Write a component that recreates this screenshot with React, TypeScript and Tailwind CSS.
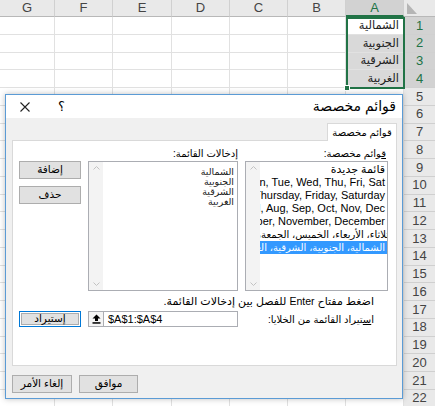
import React from 'react';

const FONT = "font-['Liberation_Sans','DejaVu_Sans',sans-serif]";

const colLetters = ['G', 'F', 'E', 'D', 'C', 'B', 'A'];
const aValues = ['الشمالية', 'الجنوبية', 'الشرقية', 'الغربية'];
const rows = Array.from({ length: 22 }, (_, i) => i + 1);

const customLists = [
  { text: 'قائمة جديدة', cls: '' },
  { text: 'Sun, Mon, Tue, Wed, Thu, Fri, Sat', cls: '' },
  { text: 'Sunday, Monday, Tuesday, Wednesday, Thursday, Friday, Saturday', cls: '' },
  { text: 'Jan, Feb, Mar, Apr, May, Jun, Jul, Aug, Sep, Oct, Nov, Dec', cls: '' },
  { text: 'January, February, March, April, May, June, July, August, September, October, November, December', cls: '' },
  { text: 'الأحد، الاثنين، الثلاثاء، الأربعاء، الخميس، الجمعة، السبت', cls: 'text-[10px] mr-[-67px]' },
  { text: 'الشمالية، الجنوبية، الشرقية، الغربية', cls: 'text-[10px]' },
];

function Chevron({ down }: { down?: boolean }) {
  return (
    <svg width="7" height="4" viewBox="0 0 7 4">
      <path d={down ? 'M0.5 0.5 L3.5 3.5 L6.5 0.5' : 'M0.5 3.5 L3.5 0.5 L6.5 3.5'} fill="none" stroke="#c2c2c2" />
    </svg>
  );
}

function UpArrow() {
  return (
    <svg width="9" height="10" viewBox="0 0 9 10">
      <path d="M4.5 0.5 L8.5 4.5 H6 V7 H3 V4.5 H0.5 Z" fill="#000" />
      <rect x="0.5" y="8.2" width="8" height="1.5" fill="#000" />
    </svg>
  );
}

function ListBox({ children }: { children: React.ReactNode }) {
  return (
    <div className="flex h-full border border-[#abadb3] bg-white">
      <div className="flex-1 min-w-0 overflow-hidden">{children}</div>
      <div className="w-[14px] shrink-0 bg-[#f3f3f3] flex flex-col justify-between items-center py-[4px]">
        <Chevron />
        <Chevron down />
      </div>
    </div>
  );
}

function Btn({ children, className = '' }: { children: React.ReactNode; className?: string }) {
  return (
    <div className={`flex items-center justify-center bg-[#e1e1e1] border border-[#adadad] text-[10.5px] ${className}`}>
      {children}
    </div>
  );
}

function Sheet() {
  return (
    <div className="grid grid-cols-[55px_58px_59px_58px_58px_58px_58px_31px] grid-rows-[17px_repeat(22,17.75px)]">
      {colLetters.map(c => (
        <div
          key={c}
          className={`flex items-center justify-center text-[13px] border-r border-[#d0d0d0] ${c === 'A' ? 'bg-[#d2d2d2] text-[#217346] border-b-2 border-b-[#217346]' : 'bg-[#e9e9e9] text-[#444] border-b border-b-[#b8b8b8]'}`}
        >
          {c}
        </div>
      ))}
      <div className="relative bg-[#e9e9e9] border-b border-[#b8b8b8]">
        <svg className="absolute left-[3px] bottom-[2px]" width="10" height="11" viewBox="0 0 10 11">
          <path d="M0 0 L10 11 L0 11 Z" fill="#b5b5b5" />
        </svg>
      </div>
      {rows.map(r => (
        <React.Fragment key={r}>
          {colLetters.map(c => {
            const val = c === 'A' && r <= 4 ? aValues[r - 1] : null;
            const shaded = c === 'A' && r >= 2 && r <= 4;
            return (
              <div
                key={c}
                className={`border-r border-b border-[#e1e1e1] flex items-center justify-end pr-[4px] text-[11.5px] text-[#222] ${shaded ? 'bg-[#d9d9d9]' : 'bg-white'}`}
              >
                {val}
              </div>
            );
          })}
          <div
            className={`flex items-center justify-center text-[13px] border-b border-[#d0d0d0] ${r <= 4 ? 'bg-[#d2d2d2] text-[#217346]' : 'bg-[#e9e9e9] text-[#444]'}`}
          >
            {r}
          </div>
        </React.Fragment>
      ))}
    </div>
  );
}

function Dialog() {
  return (
    <div
      dir="rtl"
      className="absolute left-[5px] top-[94px] w-[398px] h-[305px] border border-[#5b9bd5] bg-[#f0f0f0] flex flex-col text-[10px] text-black shadow-[0_0_6px_rgba(0,0,0,0.25)]"
    >
      <div className="h-[23px] shrink-0 bg-white flex items-center justify-between pr-[6px] pl-[14px]">
        <span className="text-[14px]">قوائم مخصصة</span>
        <div className="flex items-center gap-[28px]">
          <span className="text-[13px]">؟</span>
          <svg width="10" height="10" viewBox="0 0 10 10">
            <path d="M0.5 0.5 L9.5 9.5 M9.5 0.5 L0.5 9.5" stroke="#222" strokeWidth="1.1" />
          </svg>
        </div>
      </div>

      <div className="pt-[5px] pr-[5px] pl-[6px]">
        <div className="flex">
          <div className="relative z-10 -mb-px w-[70px] h-[18px] bg-white border border-b-0 border-[#d9d9d9] flex items-center justify-center">
            قوائم مخصصة
          </div>
        </div>
        <div className="h-[226px] border border-[#d9d9d9] bg-white pt-[6px] pr-[8px]">
          <div className="grid grid-cols-[143px_150px_62px] grid-rows-[14px_130px] gap-x-[7px]">
            <div className="leading-[14px] pr-[2px]">
              <span className="underline">ق</span>وائم مخصصة:
            </div>
            <div className="leading-[14px]">إدخالات القائمة:</div>
            <div />
            <ListBox>
              <div className="pt-[1px] text-[11px]">
                {customLists.map((l, i) => (
                  <div
                    key={i}
                    className={`whitespace-nowrap h-[13px] leading-[13px] pr-[2px] ${l.cls} ${i === customLists.length - 1 ? 'bg-[#3399ff] text-white' : 'text-black'}`}
                  >
                    {l.text}
                  </div>
                ))}
              </div>
            </ListBox>
            <ListBox>
              <div className="pt-[5px] pr-[3px] text-[9.5px] text-[#222]">
                {aValues.map(v => (
                  <div key={v} className="h-[10px] leading-[10px] whitespace-nowrap">{v}</div>
                ))}
              </div>
            </ListBox>
            <div className="flex flex-col gap-[7px]">
              <Btn className="h-[18px]">
                <span className="underline">إ</span>ضافة
              </Btn>
              <Btn className="h-[18px]">حذف</Btn>
            </div>
          </div>

          <div className="mt-[4px] h-[12px] leading-[12px] pr-[14px] text-[11px]">
            اضغط مفتاح <span className="text-[10.5px]">Enter</span> للفصل بين إدخالات القائمة.
          </div>

          <div className="mt-[4px] grid grid-cols-[143px_150px_62px] gap-x-[7px] items-center">
            <div className="pr-[14px]">
              ا<span className="underline">س</span>تيراد القائمة من الخلايا:
            </div>
            <div dir="ltr" className="h-[16px] flex items-stretch bg-white border border-[#abadb3]">
              <div className="w-[15px] flex items-center justify-center border-r border-[#abadb3] bg-[#f4f4f4]">
                <UpArrow />
              </div>
              <span className="pl-[4px] leading-[14px] text-[11px]">$A$1:$A$4</span>
            </div>
            <div className="h-[16px] border border-[#0078d7] p-px">
              <div className="h-full flex items-center justify-center bg-[#e1e1e1] border border-[#adadad] text-[10.5px]">
                <span className="underline">إ</span>ستيراد
              </div>
            </div>
          </div>
        </div>
      </div>

      <div className="mt-[9px] flex justify-end gap-[7px] pl-[6px]">
        <Btn className="w-[59px] h-[18px]">موافق</Btn>
        <Btn className="w-[60px] h-[18px]">إلغاء الأمر</Btn>
      </div>
    </div>
  );
}

export default function App() {
  return (
    <div className={`relative w-[435px] h-[406px] overflow-hidden bg-white ${FONT}`}>
      <Sheet />
      <div className="absolute left-[346px] top-[17px] w-[59px] h-[72px] border-2 border-[#217346] pointer-events-none">
        <div className="absolute -left-[4px] -bottom-[4px] w-[6px] h-[6px] bg-[#217346] border border-white" />
      </div>
      <Dialog />
    </div>
  );
}
